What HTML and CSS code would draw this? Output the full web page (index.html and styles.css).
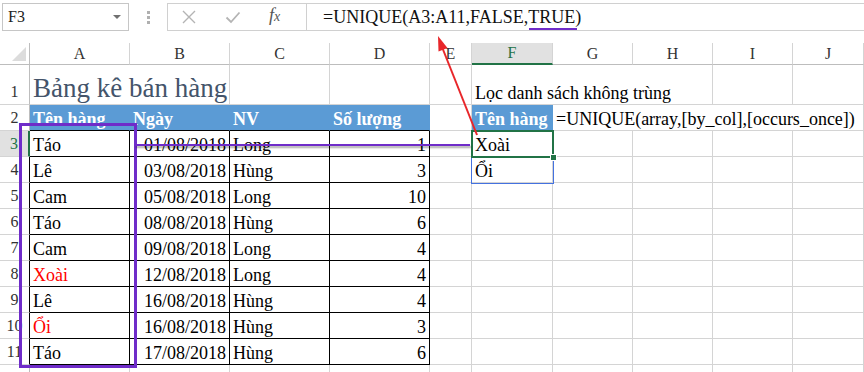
FILE: index.html
```html
<!DOCTYPE html>
<html lang="vi">
<head>
<meta charset="utf-8">
<title>UNIQUE</title>
<link rel="stylesheet" href="styles.css">
</head>
<body>
<div class="app">
  <div class="fbar">
    <div class="namebox"><span>F3</span><span class="nb-arrow"></span></div>
    <div class="grip"><i></i><i></i><i></i></div>
    <div class="fx-tools">
      <svg class="ico" viewBox="0 0 16 16" width="16" height="16"><path d="M2 2L14 14M14 2L2 14" stroke="#b4b4b4" stroke-width="1.4" fill="none"/></svg>
      <svg class="ico" viewBox="0 0 16 16" width="16" height="16"><path d="M1.5 8.5L6 13L14.5 3.5" stroke="#b4b4b4" stroke-width="1.8" fill="none"/></svg>
      <span class="fx"><i class="fx-f">f</i><i class="fx-x">x</i></span>
    </div>
    <div class="finput"><span>=UNIQUE(A3:A11,FALSE,TRUE)</span></div>
  </div>

  <div class="sheet">
    <div class="row colhdr">
      <div class="corner"><svg viewBox="0 0 16 16" width="16" height="16"><path d="M1 15H15V1Z" fill="#dcdcdc"/></svg></div>
      <div class="ch">A</div><div class="ch">B</div><div class="ch">C</div><div class="ch">D</div><div class="ch">E</div><div class="ch sel">F</div><div class="ch">G</div><div class="ch">H</div><div class="ch">I</div><div class="ch">J</div>
    </div>

    <div class="row r1">
      <div class="rh">1</div>
      <div class="c title span2">Bảng kê bán hàng</div>
      <div class="c"></div><div class="c"></div><div class="c"></div>
      <div class="c span3">Lọc danh sách không trùng</div>
      <div class="c"></div><div class="c"></div>
    </div>

    <div class="row">
      <div class="rh">2</div>
      <div class="c th">Tên hàng</div><div class="c th">Ngày</div><div class="c th">NV</div><div class="c th">Số lượng</div>
      <div class="c"></div>
      <div class="c th th-f">Tên hàng</div>
      <div class="c span4">=UNIQUE(array,[by_col],[occurs_once])</div>
    </div>

    <div class="row">
      <div class="rh act">3</div>
      <div class="c t">Táo</div><div class="c t num">01/08/2018</div><div class="c t">Long</div><div class="c t num">1</div>
      <div class="c"></div><div class="c">Xoài</div><div class="c"></div><div class="c"></div><div class="c"></div><div class="c"></div>
    </div>
    <div class="row">
      <div class="rh tb">4</div>
      <div class="c t">Lê</div><div class="c t num">03/08/2018</div><div class="c t">Hùng</div><div class="c t num">3</div>
      <div class="c"></div><div class="c">Ổi</div><div class="c"></div><div class="c"></div><div class="c"></div><div class="c"></div>
    </div>
    <div class="row">
      <div class="rh tb">5</div>
      <div class="c t">Cam</div><div class="c t num">05/08/2018</div><div class="c t">Long</div><div class="c t num">10</div>
      <div class="c"></div><div class="c"></div><div class="c"></div><div class="c"></div><div class="c"></div><div class="c"></div>
    </div>
    <div class="row">
      <div class="rh tb">6</div>
      <div class="c t">Táo</div><div class="c t num">08/08/2018</div><div class="c t">Hùng</div><div class="c t num">6</div>
      <div class="c"></div><div class="c"></div><div class="c"></div><div class="c"></div><div class="c"></div><div class="c"></div>
    </div>
    <div class="row">
      <div class="rh tb">7</div>
      <div class="c t">Cam</div><div class="c t num">09/08/2018</div><div class="c t">Long</div><div class="c t num">4</div>
      <div class="c"></div><div class="c"></div><div class="c"></div><div class="c"></div><div class="c"></div><div class="c"></div>
    </div>
    <div class="row">
      <div class="rh tb">8</div>
      <div class="c t red">Xoài</div><div class="c t num">12/08/2018</div><div class="c t">Long</div><div class="c t num">4</div>
      <div class="c"></div><div class="c"></div><div class="c"></div><div class="c"></div><div class="c"></div><div class="c"></div>
    </div>
    <div class="row">
      <div class="rh tb">9</div>
      <div class="c t">Lê</div><div class="c t num">16/08/2018</div><div class="c t">Hùng</div><div class="c t num">4</div>
      <div class="c"></div><div class="c"></div><div class="c"></div><div class="c"></div><div class="c"></div><div class="c"></div>
    </div>
    <div class="row">
      <div class="rh tb">10</div>
      <div class="c t red">Ổi</div><div class="c t num">16/08/2018</div><div class="c t">Hùng</div><div class="c t num">3</div>
      <div class="c"></div><div class="c"></div><div class="c"></div><div class="c"></div><div class="c"></div><div class="c"></div>
    </div>
    <div class="row">
      <div class="rh tb">11</div>
      <div class="c t">Táo</div><div class="c t num">17/08/2018</div><div class="c t">Hùng</div><div class="c t num">6</div>
      <div class="c"></div><div class="c"></div><div class="c"></div><div class="c"></div><div class="c"></div><div class="c"></div>
    </div>
    <div class="row">
      <div class="rh"></div>
      <div class="c"></div><div class="c"></div><div class="c"></div><div class="c"></div>
      <div class="c"></div><div class="c"></div><div class="c"></div><div class="c"></div><div class="c"></div><div class="c"></div>
    </div>
  </div>

  <div class="spill"></div>
  <div class="selbox"><span class="handle"></span></div>
  <div class="mark-box"></div>
  <div class="mark-line"></div>
  <div class="mark-under"></div>
  <svg class="arrow" viewBox="0 0 864 372" width="864" height="372">
    <line x1="477" y1="135" x2="442" y2="47" stroke="#e8262a" stroke-width="2"/>
    <polygon points="438,36 447.5,48 438.5,51.5" fill="#e8262a"/>
  </svg>
</div>
</body>
</html>
```

FILE: styles.css
```css
* { box-sizing: border-box; }
html, body { margin: 0; padding: 0; }
body {
  width: 864px;
  height: 372px;
  overflow: hidden;
  background: #fff;
  font-family: "Liberation Serif", "Times New Roman", serif;
}
.app {
  position: relative;
  width: 864px;
  height: 372px;
  overflow: hidden;
}

/* formula bar */
.fbar {
  height: 43px;
  display: flex;
  align-items: flex-start;
  padding: 3px 0 0 2px;
}
.namebox {
  width: 127px;
  height: 28px;
  border: 1px solid #c6c6c6;
  display: flex;
  align-items: center;
  justify-content: space-between;
  padding: 0 7px 0 5px;
  font-size: 16px;
  color: #222;
}
.nb-arrow {
  width: 0;
  height: 0;
  border-left: 4px solid transparent;
  border-right: 4px solid transparent;
  border-top: 4px solid #707070;
}
.grip {
  width: 38px;
  display: flex;
  flex-direction: column;
  align-items: center;
  gap: 2px;
  padding-top: 8px;
}
.grip i {
  display: block;
  width: 3px;
  height: 3px;
  background: #b0b0b0;
}
.fx-tools {
  width: 139px;
  height: 28px;
  border: 1px solid #d0d0d0;
  border-right: none;
  display: flex;
  align-items: center;
  gap: 28px;
  padding-left: 13px;
}
.ico { display: block; }
.fx {
  width: 16px;
  display: flex;
  align-items: baseline;
  color: #555;
  font-style: italic;
  margin-top: -3px;
}
.fx-f { font-size: 18px; }
.fx-x { font-size: 14px; }
.finput {
  flex: 1;
  height: 28px;
  border: 1px solid #d0d0d0;
  border-right: none;
  padding-left: 16px;
  display: flex;
  align-items: center;
  font-size: 18px;
  color: #111;
  white-space: nowrap;
}

/* sheet */
.sheet { display: flex; flex-direction: column; }
.row {
  display: grid;
  grid-template-columns: 30px 100px 100px 100px 100px 42px 81px 80px 80px 80px 71px;
  height: 26px;
  flex: none;
}
.colhdr { height: 22px; }
.r1 { height: 40px; }

.corner {
  border-right: 1px solid #bdbdbd;
  border-bottom: 1px solid #bdbdbd;
  display: flex;
  align-items: flex-end;
  justify-content: flex-end;
  padding: 0 2px 2px 0;
}
.corner svg { display: block; }
.ch {
  border-right: 1px solid #d4d4d4;
  border-bottom: 1px solid #bdbdbd;
  display: flex;
  align-items: center;
  justify-content: center;
  font-size: 16px;
  color: #333;
}
.ch.sel {
  background: #e1e1e1;
  color: #217346;
  border-bottom: 2px solid #217346;
}

.rh {
  border-right: 1px solid #bdbdbd;
  border-bottom: 1px solid #d4d4d4;
  display: flex;
  align-items: flex-end;
  justify-content: center;
  font-size: 16px;
  line-height: 20px;
  color: #333;
  padding-bottom: 2px;
}
.rh.tb { border-right-color: #000; }
.rh.act {
  background: #e1e1e1;
  color: #217346;
  border-right: 2px solid #217346;
}

.c {
  border-right: 1px solid #d4d4d4;
  border-bottom: 1px solid #d4d4d4;
  display: flex;
  align-items: flex-end;
  padding: 0 3px;
  font-size: 18px;
  line-height: 21px;
  white-space: nowrap;
  color: #000;
}
.span2 { grid-column: span 2; }
.span3 { grid-column: span 3; }
.span4 { grid-column: span 4; }
.title {
  font-size: 27px;
  line-height: 31px;
  color: #44546a;
}
.th {
  background: #5b9bd5;
  color: #fff;
  font-weight: bold;
  border-right-color: #5b9bd5;
  border-bottom-color: #000;
}
.th-f { border-bottom-color: #5b9bd5; }
.t {
  border-right-color: #000;
  border-bottom-color: #000;
}
.num { justify-content: flex-end; }
.red { color: #ff0000; }

/* overlays */
.spill {
  position: absolute;
  left: 471px;
  top: 130px;
  width: 83px;
  height: 54px;
  border: 1px solid #4472e0;
}
.selbox {
  position: absolute;
  left: 471px;
  top: 130px;
  width: 83px;
  height: 28px;
  border: 2px solid #217346;
}
.handle {
  position: absolute;
  right: -5px;
  bottom: -5px;
  width: 7px;
  height: 7px;
  background: #217346;
  border: 1px solid #fff;
}
.mark-box {
  position: absolute;
  left: 19px;
  top: 123px;
  width: 118px;
  height: 245px;
  border: 3px solid #6f2cc9;
}
.mark-line {
  position: absolute;
  left: 135px;
  top: 144px;
  width: 335px;
  height: 2px;
  background: #6f2cc9;
  box-shadow: 1px 2px 2px rgba(0, 0, 0, 0.35);
}
.mark-under {
  position: absolute;
  left: 529px;
  top: 28px;
  width: 48px;
  height: 2px;
  background: #6f2cc9;
}
.arrow {
  position: absolute;
  left: 0;
  top: 0;
  pointer-events: none;
}
```
